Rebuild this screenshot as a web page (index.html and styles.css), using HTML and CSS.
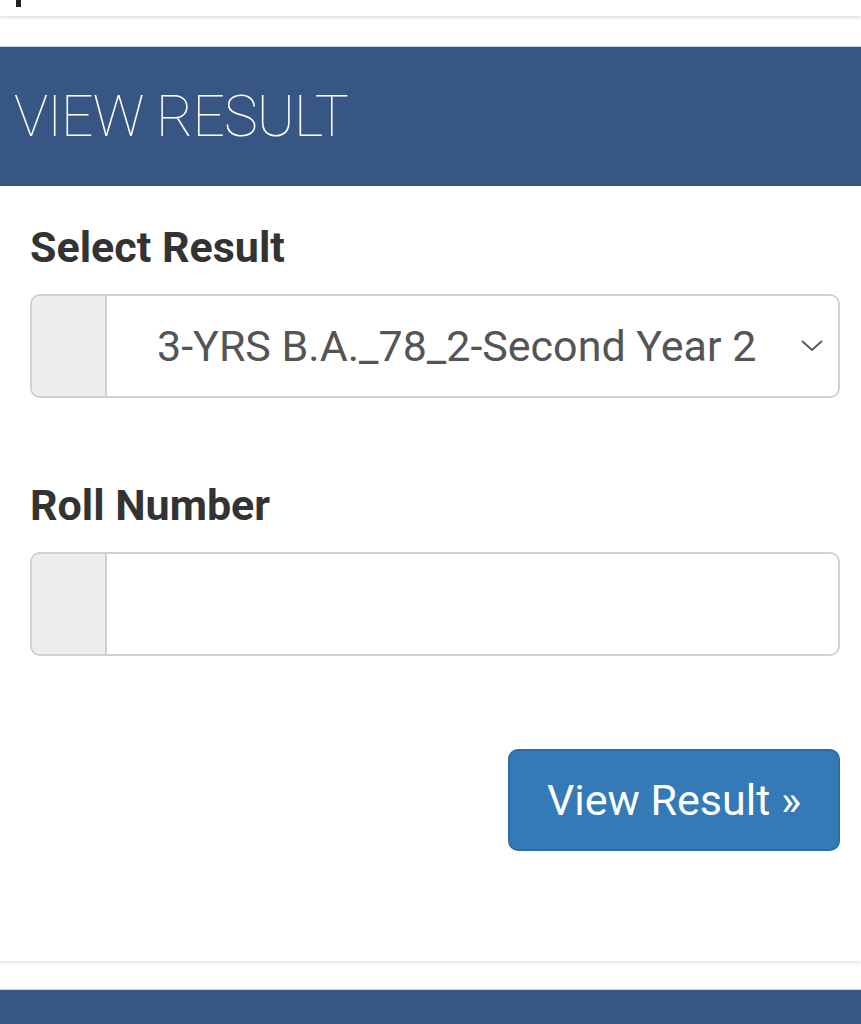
FILE: index.html
```html
<!DOCTYPE html>
<html lang="en">
<head>
    <meta charset="UTF-8">
    <meta name="viewport" content="width=device-width, initial-scale=1.0">
    <title>View Result</title>
    <link rel="stylesheet" href="styles.css">
</head>
<body>
    <!-- Barra superior (cortada) -->
    <div class="top-bar">
        <span class="top-mark"></span>
    </div>

    <div class="panel">
        <div class="panel-heading">VIEW RESULT</div>

        <div class="panel-body">
            <div class="form-group">
                <label class="form-label">Select Result</label>
                <div class="input-group">
                    <span class="input-addon"></span>
                    <div class="select-box">
                        <span class="select-text">3-YRS B.A._78_2-Second Year 2</span>
                        <svg class="chevron" width="24" height="14" viewBox="0 0 24 14">
                            <path d="M2 2 L12 11 L22 2" fill="none" stroke="#555" stroke-width="1.8"/>
                        </svg>
                    </div>
                </div>
            </div>

            <div class="form-group">
                <label class="form-label" for="rollNumber">Roll Number</label>
                <div class="input-group">
                    <span class="input-addon"></span>
                    <input type="text" id="rollNumber" class="text-input">
                </div>
            </div>

            <div class="actions">
                <button class="btn-primary">View Result &raquo;</button>
            </div>
        </div>
    </div>

    <div class="footer-bar"></div>
</body>
</html>
```

FILE: styles.css
```css
* {
    margin: 0;
    padding: 0;
    box-sizing: border-box;
}

body {
    font-family: Roboto, "Liberation Sans", Arial, sans-serif;
    background-color: #fff;
    color: #333;
    width: 861px;
    overflow: hidden;
}

.top-bar {
    height: 16px;
    background-color: #fff;
    box-shadow: 0 2px 3px rgba(0, 0, 0, 0.12);
    padding-left: 16px;
}

.top-mark {
    display: block;
    width: 5px;
    height: 7px;
    background-color: #222;
}

.panel {
    margin-top: 30px;
    background-color: #fff;
    box-shadow: 0 2px 3px rgba(0, 0, 0, 0.1);
}

.panel-heading {
    height: 140px;
    background-color: #385684;
    border-top: 1px solid #c9d6ea;
    color: #fff;
    font-size: 57px;
    font-weight: 100;
    padding-left: 14px;
    display: flex;
    align-items: center;
    letter-spacing: -0.9px;
}

.panel-body {
    padding: 37px 21px 110px 30px;
}

.form-group {
    margin-bottom: 83px;
}

.form-label {
    display: block;
    font-size: 43px;
    line-height: 48px;
    font-weight: bold;
    color: #333;
    margin-bottom: 23px;
}

.input-group {
    display: flex;
    height: 104px;
    border: 2px solid #d0d0d0;
    border-radius: 10px;
    overflow: hidden;
}

.input-addon {
    width: 75px;
    background-color: #eee;
    border-right: 2px solid #d0d0d0;
}

.select-box {
    flex: 1;
    display: flex;
    align-items: center;
    padding-left: 50px;
    padding-right: 12px;
    background-color: #fff;
}

.select-text {
    flex: 1;
    font-size: 43px;
    color: #555;
}

.chevron {
    margin-right: 2px;
}

.text-input {
    flex: 1;
    border: none;
    outline: none;
    font-size: 43px;
    padding: 0 20px;
    background-color: #fff;
}

.actions {
    display: flex;
    justify-content: flex-end;
    margin-top: -83px;
    padding-top: 93px;
}

.btn-primary {
    width: 332px;
    height: 102px;
    background-color: #337ab7;
    border: 2px solid #2e6da4;
    border-radius: 10px;
    color: #fff;
    font-family: Roboto, "Liberation Sans", Arial, sans-serif;
    font-size: 43px;
    cursor: pointer;
}

.footer-bar {
    margin-top: 28px;
    height: 40px;
    background-color: #385684;
    border-top: 1px solid #c9d6ea;
}
```
